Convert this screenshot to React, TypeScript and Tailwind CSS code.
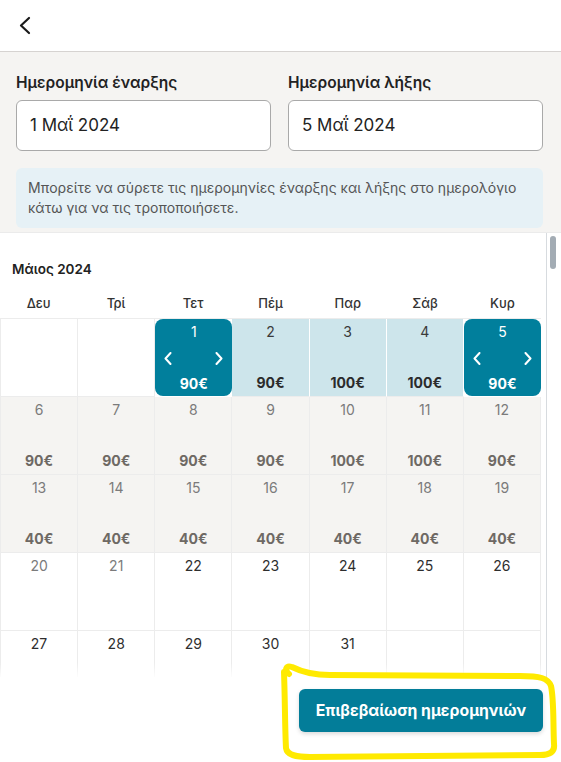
import React from "react";

type Cell = { day: number | null; price?: string; kind: "empty" | "sel" | "range" | "past" | "muted" | "normal" };

const monthNames = ["Ιανουάριος", "Φεβρουάριος", "Μάρτιος", "Απρίλιος", "Μάιος", "Ιούνιος", "Ιούλιος", "Αύγουστος", "Σεπτέμβριος", "Οκτώβριος", "Νοέμβριος", "Δεκέμβριος"];
const weekdays = ["Δευ", "Τρί", "Τετ", "Πέμ", "Παρ", "Σάβ", "Κυρ"];

const mayPrices: Record<number, string> = {
  1: "90€", 2: "90€", 3: "100€", 4: "100€", 5: "90€",
  6: "90€", 7: "90€", 8: "90€", 9: "90€", 10: "100€", 11: "100€", 12: "90€",
  13: "40€", 14: "40€", 15: "40€", 16: "40€", 17: "40€", 18: "40€", 19: "40€",
};

function buildMonth(year: number, month: number): Cell[] {
  const first = new Date(year, month, 1).getDay();
  const offset = (first + 6) % 7;
  const days = new Date(year, month + 1, 0).getDate();
  const cells: Cell[] = [];
  for (let i = 0; i < offset; i++) cells.push({ day: null, kind: "empty" });
  for (let d = 1; d <= days; d++) {
    let kind: Cell["kind"] = "normal";
    let price: string | undefined;
    if (year === 2024 && month === 4) {
      price = mayPrices[d];
      if (d === 1 || d === 5) kind = "sel";
      else if (d >= 2 && d <= 4) kind = "range";
      else if (d >= 6 && d <= 19) kind = "past";
      else if (d === 20 || d === 21) kind = "muted";
    }
    cells.push({ day: d, price, kind });
  }
  while (cells.length % 7 !== 0) cells.push({ day: null, kind: "empty" });
  return cells;
}

function ChevLeft() {
  return (
    <svg width="8" height="13" viewBox="0 0 8 13">
      <path d="M6.5 1 L1.5 6.5 L6.5 12" fill="none" stroke="white" strokeWidth="2" strokeLinecap="round" strokeLinejoin="round" />
    </svg>
  );
}
function ChevRight() {
  return (
    <svg width="8" height="13" viewBox="0 0 8 13">
      <path d="M1.5 1 L6.5 6.5 L1.5 12" fill="none" stroke="white" strokeWidth="2" strokeLinecap="round" strokeLinejoin="round" />
    </svg>
  );
}

function DayCell({ c }: { c: Cell }) {
  if (c.kind === "empty") {
    return <div className="h-[78px] border-r border-b border-[#ececec] bg-white" />;
  }
  if (c.kind === "sel") {
    return (
      <div className="h-[78px] border-b border-white bg-white">
        <div className="h-[77px] rounded-[8px] bg-[#017f9c] flex flex-col items-center justify-between pt-[3px] pb-[2px] text-white">
          <span className="text-[14px] leading-[20px]">{c.day}</span>
          <div className="w-full flex justify-between pl-[9px] pr-[9px]">
            <ChevLeft />
            <ChevRight />
          </div>
          <span className="text-[14px] leading-[20px] font-bold">{c.price}</span>
        </div>
      </div>
    );
  }
  const bg =
    c.kind === "range" ? "bg-[#cde5eb] border-r-white" : c.kind === "past" ? "bg-[#f5f4f2]" : "bg-white";
  const numColor =
    c.kind === "range" ? "text-[#3a3a3a]" : c.kind === "past" || c.kind === "muted" ? "text-[#7b7b7b]" : "text-[#2e2e2e]";
  const priceColor = c.kind === "range" ? "text-[#2b2b2b]" : "text-[#6e6964]";
  return (
    <div className={`h-[78px] border-r border-b border-[#ececec] ${bg} flex flex-col items-center justify-between pt-[3px] pb-[3px]`}>
      <span className={`text-[14px] leading-[20px] ${numColor}`}>{c.day}</span>
      {c.price ? <span className={`text-[14px] leading-[20px] font-bold ${priceColor}`}>{c.price}</span> : <span />}
    </div>
  );
}

function Month({ year, month }: { year: number; month: number }) {
  const cells = buildMonth(year, month);
  return (
    <div className="pt-[27px]">
      <div className="pl-[12px] text-[13.5px] leading-[18px] font-semibold text-[#222]">
        {monthNames[month]} {year}
      </div>
      <div className="mt-[12px] grid grid-cols-7 h-[28px] items-center">
        {weekdays.map((w) => (
          <div key={w} className="text-center text-[13px] font-medium text-[#333]">
            {w}
          </div>
        ))}
      </div>
      <div className="grid grid-cols-7 border-t border-l border-[#ececec]">
        {cells.map((c, i) => (
          <DayCell key={i} c={c} />
        ))}
      </div>
    </div>
  );
}

export default function App() {
  return (
    <div
      className="relative h-[762px] w-[561px] flex flex-col bg-white overflow-hidden"
      style={{ fontFamily: "Inter, 'Noto Sans', sans-serif" }}
    >
      <div className="h-[52px] shrink-0 border-b border-[#d6d3d1] flex items-center pl-[17px]">
        <svg width="16" height="20" viewBox="0 0 16 20">
          <path d="M12 2 L4 9.5 L12 17" fill="none" stroke="#1a1a1a" strokeWidth="2.2" strokeLinecap="round" strokeLinejoin="round" />
        </svg>
      </div>

      <div className="shrink-0 bg-[#f5f4f2] pl-4 pr-[18px] pt-[21px] pb-[4px] border-b border-[#ebebeb]">
        <div className="grid grid-cols-2 gap-[17px]">
          <div>
            <div className="text-[15.5px] leading-[20px] font-semibold text-[#222]">Ημερομηνία έναρξης</div>
            <div className="mt-[7px] h-[51px] rounded-[6px] border border-[#a9a9a9] bg-white flex items-center pl-[13px] text-[17px] text-[#222]">
              1 Μαΐ 2024
            </div>
          </div>
          <div>
            <div className="text-[15.5px] leading-[20px] font-semibold text-[#222]">Ημερομηνία λήξης</div>
            <div className="mt-[7px] h-[51px] rounded-[6px] border border-[#a9a9a9] bg-white flex items-center pl-[13px] text-[17px] text-[#222]">
              5 Μαΐ 2024
            </div>
          </div>
        </div>
        <div className="mt-[17px] rounded-[6px] bg-[#e6f1f6] px-[12px] py-[10px] text-[14px] leading-[20px] text-[#555]">
          Μπορείτε να σύρετε τις ημερομηνίες έναρξης και λήξης στο ημερολόγιο κάτω για να τις τροποποιήσετε.
        </div>
      </div>

      <div className="relative flex-1 min-h-0 flex">
        <div className="flex-1 min-w-0 h-full overflow-hidden">
          <div className="mr-[5px]">
            <Month year={2024} month={4} />
          </div>
        </div>
        <div className="w-[15px] shrink-0 h-full border-l border-[#d7dbdf] bg-white pl-[3px] pt-[3px]">
          <div className="w-[6px] h-[33px] rounded-full bg-[#a3acb4]" />
        </div>
        <div className="pointer-events-none absolute bottom-0 left-0 w-[546px] h-[14px] bg-gradient-to-b from-white/0 to-white/90" />
      </div>

      <div className="h-[85px] shrink-0 flex justify-end items-start pt-[12px] pr-[18px] bg-white">
        <div className="w-[244px] h-[43px] rounded-[6px] bg-[#037d99] shadow-[0_2px_4px_rgba(0,0,0,0.15)] flex items-center justify-center text-white text-[15.75px] font-bold">
          Επιβεβαίωση ημερομηνιών
        </div>
      </div>

      <svg className="pointer-events-none absolute left-0 top-0" width="561" height="762" viewBox="0 0 561 762">
        <path
          d="M289 674 C284 670 286 665 292 667 C300 671 310 675 330 675 L520 676 C540 676 548 678 551 686 C554 700 553 720 554 744 C555 752 550 755 540 755 L310 757 C295 757 287 755 286 748 C285 730 285 700 284 672"
          fill="none"
          stroke="#ffea00"
          strokeWidth="6"
          strokeLinecap="round"
          strokeLinejoin="round"
        />
      </svg>
    </div>
  );
}
